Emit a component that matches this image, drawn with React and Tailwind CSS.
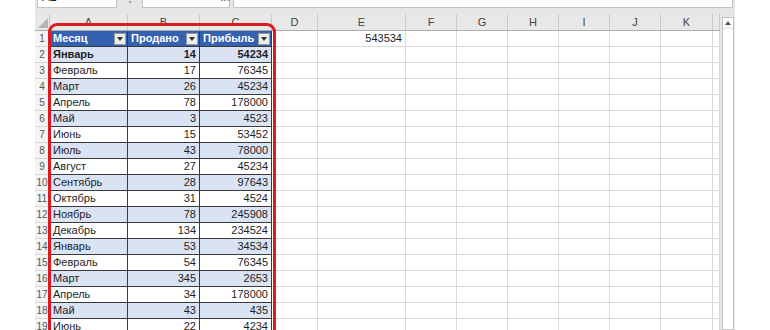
import React from 'react'

const cols = [
  { l: 'A', w: 'w-[78px]' },
  { l: 'B', w: 'w-[72px]' },
  { l: 'C', w: 'w-[72px]' },
  { l: 'D', w: 'w-[46px]' },
  { l: 'E', w: 'w-[88px]' },
  { l: 'F', w: 'w-[51px]' },
  { l: 'G', w: 'w-[51px]' },
  { l: 'H', w: 'w-[51px]' },
  { l: 'I', w: 'w-[51px]' },
  { l: 'J', w: 'w-[51px]' },
  { l: 'K', w: 'w-[52px]' },
  { l: '', w: 'w-[7px]' },
]

const data = [
  ['Январь', 14, 54234],
  ['Февраль', 17, 76345],
  ['Март', 26, 45234],
  ['Апрель', 78, 178000],
  ['Май', 3, 4523],
  ['Июнь', 15, 53452],
  ['Июль', 43, 78000],
  ['Август', 27, 45234],
  ['Сентябрь', 28, 97643],
  ['Октябрь', 31, 4524],
  ['Ноябрь', 78, 245908],
  ['Декабрь', 134, 234524],
  ['Январь', 53, 34534],
  ['Февраль', 54, 76345],
  ['Март', 345, 2653],
  ['Апрель', 34, 178000],
  ['Май', 43, 435],
  ['Июнь', 22, 4234],
]

function Filter() {
  return (
    <span className="absolute right-[1px] top-[2px] w-[12px] h-[12px] bg-[#eeeeee] border border-[#9a9a9a] flex items-center justify-center">
      <svg width="6" height="4" viewBox="0 0 6 4"><path d="M0 0h6L3 4z" fill="#333" /></svg>
    </span>
  )
}

function HeaderCell({ w, children }) {
  return (
    <div className={`${w} shrink-0 relative h-full border-r border-b border-[#3a3a3a] bg-[#3461b0] text-white font-bold pl-[3px] flex items-center`}>
      {children}
      <Filter />
    </div>
  )
}

function GridCell({ w, children }) {
  return (
    <div className={`${w} shrink-0 h-full border-r border-b border-[#dadada] flex items-center justify-end pr-[3px]`}>
      {children}
    </div>
  )
}

function Row({ n, children }) {
  return (
    <div className="flex h-[16px]">
      <div className="w-[15px] shrink-0 h-full border-r border-b border-[#d6d6d6] bg-[#f4f4f4] text-[#555] text-[10px] flex items-center justify-center">{n}</div>
      {children}
    </div>
  )
}

export default function App() {
  return (
    <div className="relative w-[770px] h-[330px] overflow-hidden bg-white flex text-[11px] text-[#1e1e1e]" style={{ fontFamily: '"Liberation Sans", Arial, sans-serif' }}>
      <div className="w-[35px] shrink-0" />
      <div className="w-[700px] shrink-0 bg-[#e6e6e6] flex flex-col">
        {/* formula bar, cut off at the top */}
        <div className="h-[8px] overflow-hidden flex items-end">
          <div className="ml-[2px] w-[80px] h-[22px] shrink-0 bg-white border border-[#c3c3c3] text-[12px] pl-[4px] flex items-center">A2</div>
          <div className="w-[25px] shrink-0 h-[22px] text-[#777] text-[12px] flex items-center justify-center">⋮</div>
          <div className="w-[88px] h-[22px] shrink-0 bg-white border border-[#c3c3c3] text-[12px] text-[#555] flex items-center gap-[10px] pl-[10px]">
            <span>✕</span><span>✓</span><span className="ml-[28px] italic">fx</span>
          </div>
          <div className="ml-[3px] w-[500px] h-[22px] shrink-0 bg-white border border-[#c3c3c3]" />
        </div>
        <div className="h-[6px]" />
        <div className="flex flex-1 min-h-0">
          <div className="w-[685px] shrink-0 bg-white border-r border-[#9d9d9d] flex flex-col">
            {/* column header */}
            <div className="flex h-[17px] bg-[#e8e8e8] border-b border-[#adadad] text-[#444]">
              <div className="w-[15px] shrink-0 h-full border-r border-[#c8c8c8] flex items-end justify-end pb-[2px] pr-[1px]">
                <svg width="10" height="10" viewBox="0 0 10 10"><path d="M10 0V10H0z" fill="#b5b5b5" /></svg>
              </div>
              {cols.map((c, i) => (
                <div key={i} className={`${c.w} shrink-0 h-full border-r border-[#cacaca] flex items-center justify-center`}>{c.l}</div>
              ))}
            </div>
            <Row n={1}>
              <HeaderCell w="w-[78px]">Месяц</HeaderCell>
              <HeaderCell w="w-[72px]">Продано</HeaderCell>
              <HeaderCell w="w-[72px]">Прибыль</HeaderCell>
              {cols.slice(3).map((c, i) => (
                <GridCell key={i} w={c.w}>{c.l === 'E' ? '543534' : ''}</GridCell>
              ))}
            </Row>
            {data.map((r, i) => {
              const band = i % 2 === 0 ? 'bg-[#dae3f3]' : 'bg-white'
              const bold = i === 0 ? 'font-bold' : ''
              return (
                <Row key={i} n={i + 2}>
                  <div className={`w-[78px] shrink-0 h-full border-r border-b border-[#3a3a3a] ${band} ${bold} pl-[3px] flex items-center`}>{r[0]}</div>
                  <div className={`w-[72px] shrink-0 h-full border-r border-b border-[#3a3a3a] ${band} ${bold} pr-[3px] flex items-center justify-end`}>{r[1]}</div>
                  <div className={`w-[72px] shrink-0 h-full border-r border-b border-[#3a3a3a] ${band} ${bold} pr-[3px] flex items-center justify-end`}>{r[2]}</div>
                  {cols.slice(3).map((c, j) => (
                    <GridCell key={j} w={c.w} />
                  ))}
                </Row>
              )
            })}
          </div>
          <div className="w-[2px] shrink-0" />
          <div className="w-[12px] shrink-0 mt-[3px] bg-white border border-[#c2c2c2] flex flex-col">
            <div className="h-[11px] flex items-center justify-center border-b border-[#e0e0e0]">
              <svg width="6" height="4" viewBox="0 0 6 4"><path d="M0 4h6L3 0z" fill="#555" /></svg>
            </div>
          </div>
          <div className="w-[1px] shrink-0" />
        </div>
      </div>
      {/* red highlight around the table */}
      <div className="absolute left-[48px] top-[23px] w-[228px] h-[340px] border-[3px] border-[#dc1a1f] rounded-[9px]" />
    </div>
  )
}
